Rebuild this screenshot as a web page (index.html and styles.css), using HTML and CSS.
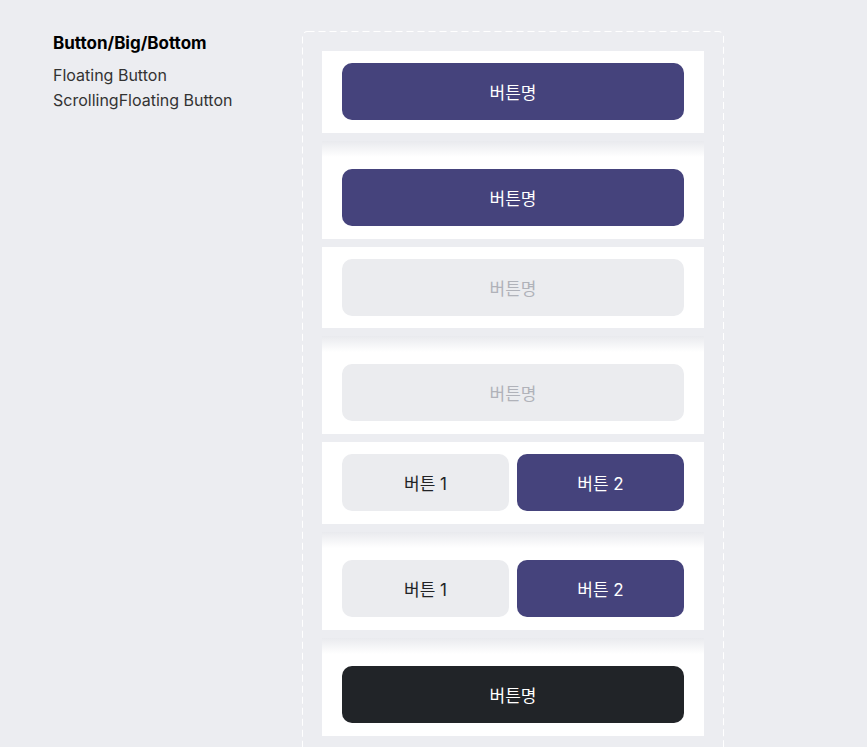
FILE: index.html
```html
<!DOCTYPE html>
<html lang="ko">
<head>
<meta charset="utf-8">
<title>Button/Big/Bottom</title>
<link rel="stylesheet" href="styles.css">
</head>
<body>
<div class="page">
  <aside class="info">
    <h1 class="info-title">Button/Big/Bottom</h1>
    <p class="info-line">Floating Button</p>
    <p class="info-line">ScrollingFloating Button</p>
  </aside>
  <section class="frame">
    <div class="card">
      <button class="btn btn-primary">버튼명</button>
    </div>
    <div class="card card-scroll">
      <button class="btn btn-primary">버튼명</button>
    </div>
    <div class="card">
      <button class="btn btn-disabled">버튼명</button>
    </div>
    <div class="card card-scroll">
      <button class="btn btn-disabled">버튼명</button>
    </div>
    <div class="card card-pair">
      <button class="btn btn-secondary">버튼 1</button>
      <button class="btn btn-primary">버튼 2</button>
    </div>
    <div class="card card-scroll card-pair">
      <button class="btn btn-secondary">버튼 1</button>
      <button class="btn btn-primary">버튼 2</button>
    </div>
    <div class="card card-scroll">
      <button class="btn btn-dark">버튼명</button>
    </div>
  </section>
</div>
</body>
</html>
```
FILE: styles.css
```css
html, body {
  margin: 0;
  padding: 0;
  background: #ecedf1;
  height: 100%;
  overflow: hidden;
}

body {
  font-family: Inter, "Noto Sans CJK KR", sans-serif;
  color: #222;
}

.page {
  display: flex;
  align-items: flex-start;
  padding: 31px 0 0 53px;
}

.info {
  width: 249px;
  padding-top: 2px;
}

.info-title {
  margin: 0 0 10px;
  font-size: 17px;
  line-height: 20px;
  font-weight: 700;
  color: #000;
}

.info-line {
  margin: 0;
  font-size: 16px;
  line-height: 25px;
  color: #333;
}

.frame {
  width: 422px;
  box-sizing: border-box;
  padding: 20px 20px 40px;
  display: flex;
  flex-direction: column;
  gap: 8px;
  background-image: url("data:image/svg+xml,%3Csvg xmlns='http://www.w3.org/2000/svg' width='100%25' height='100%25'%3E%3Crect x='0.5' y='0.5' width='421' height='2000' rx='5' ry='5' fill='none' stroke='%23ffffff' stroke-width='1' stroke-dasharray='7 4'/%3E%3C/svg%3E");
  background-repeat: no-repeat;
}

.card {
  background: #fff;
  padding: 12px 20px 12.8px;
  display: flex;
  gap: 8px;
}

.card-scroll {
  padding-top: 28px;
  background: linear-gradient(to bottom, #e9eaee 0px, #ffffff 16px, #ffffff 100%);
}

.btn {
  flex: 1;
  height: 57px;
  border: none;
  border-radius: 10px;
  font-family: Inter, "Noto Sans CJK KR", sans-serif;
  font-size: 17px;
  font-weight: 400;
  padding: 0;
  cursor: pointer;
}

.btn-primary {
  background: #45437c;
  color: #ffffff;
}

.btn-disabled {
  background: #ebecef;
  color: #b0b2b9;
}

.btn-secondary {
  background: #ebecef;
  color: #222326;
}

.btn-dark {
  background: #212428;
  color: #ffffff;
}
```
